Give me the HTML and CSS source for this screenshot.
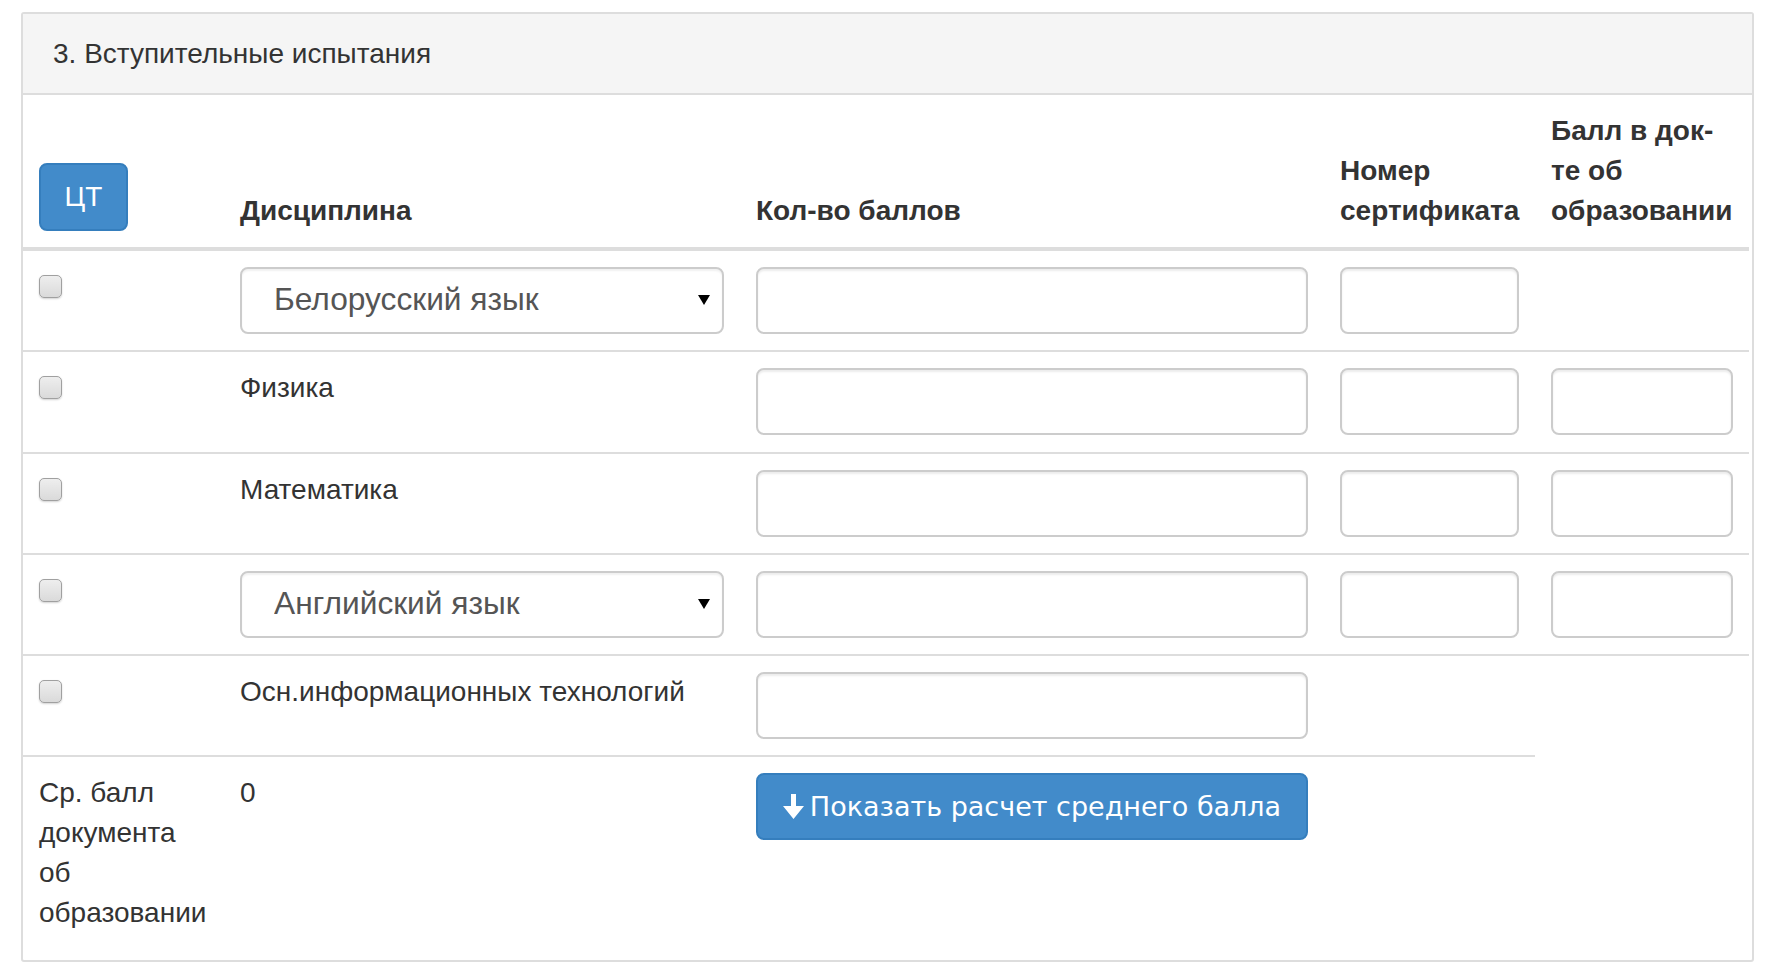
FILE: index.html
```html
<!DOCTYPE html>
<html lang="ru">
<head>
<meta charset="utf-8">
<title>Вступительные испытания</title>
<link rel="stylesheet" href="styles.css">
</head>
<body>
<div class="panel">
  <div class="panel-heading">3. Вступительные испытания</div>
  <table class="exams">
    <colgroup>
      <col class="c1"><col class="c2"><col class="c3"><col class="c4"><col class="c5">
    </colgroup>
    <thead>
      <tr>
        <th><button class="btn btn-ct" type="button">ЦТ</button></th>
        <th>Дисциплина</th>
        <th>Кол-во баллов</th>
        <th>Номер сертификата</th>
        <th>Балл в док-те об образовании</th>
      </tr>
    </thead>
    <tbody>
      <tr>
        <td><input type="checkbox" class="chk"></td>
        <td>
          <div class="select-wrap">
            <select class="form-control select"><option>Белорусский язык</option></select>
            <svg class="caret" viewBox="0 0 12 10" width="12" height="10"><path d="M0 0h12L6 10z" fill="#000"/></svg>
          </div>
        </td>
        <td><input type="text" class="form-control"></td>
        <td><input type="text" class="form-control"></td>
        <td></td>
      </tr>
      <tr>
        <td><input type="checkbox" class="chk"></td>
        <td>Физика</td>
        <td><input type="text" class="form-control"></td>
        <td><input type="text" class="form-control"></td>
        <td><input type="text" class="form-control"></td>
      </tr>
      <tr>
        <td><input type="checkbox" class="chk"></td>
        <td>Математика</td>
        <td><input type="text" class="form-control"></td>
        <td><input type="text" class="form-control"></td>
        <td><input type="text" class="form-control"></td>
      </tr>
      <tr>
        <td><input type="checkbox" class="chk"></td>
        <td>
          <div class="select-wrap">
            <select class="form-control select"><option>Английский язык</option></select>
            <svg class="caret" viewBox="0 0 12 10" width="12" height="10"><path d="M0 0h12L6 10z" fill="#000"/></svg>
          </div>
        </td>
        <td><input type="text" class="form-control"></td>
        <td><input type="text" class="form-control"></td>
        <td><input type="text" class="form-control"></td>
      </tr>
      <tr>
        <td><input type="checkbox" class="chk"></td>
        <td>Осн.информационных технологий</td>
        <td><input type="text" class="form-control"></td>
        <td></td>
        <td></td>
      </tr>
      <tr class="avg-row">
        <td>Ср. балл документа об образовании</td>
        <td>0</td>
        <td>
          <button class="btn btn-calc" type="button"><svg class="arrow" viewBox="0 0 21 25" width="21" height="25"><path d="M8 0h5v12h8L10.5 25 0 12h8z" fill="#fff"/></svg>Показать расчет среднего балла</button>
        </td>
        <td></td>
      </tr>
    </tbody>
  </table>
</div>
</body>
</html>
```
FILE: styles.css
```css
html, body {
  background: #fff;
}
body {
  margin: 12px 20px 0 21px;
  font-family: "Liberation Sans", Arial, sans-serif;
  font-size: 28px;
  line-height: 40px;
  color: #333;
}
.panel {
  border: 2px solid #ddd;
  border-radius: 3px;
  background: #fff;
  padding-bottom: 10px;
}
.panel-heading {
  background: #f5f5f5;
  border-bottom: 2px solid #ddd;
  padding: 20px 30px 19px;
}
.exams {
  width: 1726px;
  table-layout: fixed;
  border-collapse: collapse;
  border-spacing: 0;
}
.c1 { width: 201px; }
.c2 { width: 516px; }
.c3 { width: 584px; }
.c4 { width: 211px; }
.c5 { width: 214px; }
.exams th {
  text-align: left;
  font-weight: bold;
  vertical-align: bottom;
  padding: 16px;
  border-bottom: 4px solid #ddd;
}
.exams td {
  vertical-align: top;
  padding: 16px 16px 16.3px;
  border-top: 2px solid #ddd;
}
.btn {
  font-family: inherit;
  cursor: pointer;
  color: #fff;
  background: #428bca;
  border: 2px solid #357ebd;
  border-radius: 8px;
}
.btn-ct {
  display: block;
  width: 89px;
  height: 68px;
  padding: 0;
  font-family: "Liberation Sans", Arial, sans-serif;
  font-size: 28px;
  line-height: 40px;
}
.form-control {
  display: block;
  box-sizing: border-box;
  width: 100%;
  height: 67px;
  margin: 0;
  border: 2px solid #ccc;
  border-radius: 8px;
  background: #fff;
  box-shadow: inset 0 2px 2px rgba(0, 0, 0, 0.075);
  font-family: "Liberation Sans", Arial, sans-serif;
  font-size: 28px;
  color: #555;
  padding: 0 24px;
}
.select-wrap {
  position: relative;
}
.select {
  -webkit-appearance: none;
  appearance: none;
  padding: 0 40px 3px 32px;
  font-size: 31.7px;
  box-shadow: inset 0 2px 2px rgba(0, 0, 0, 0.06);
}
.caret {
  position: absolute;
  right: 14px;
  top: 28px;
  pointer-events: none;
}
.chk {
  -webkit-appearance: none;
  appearance: none;
  display: block;
  width: 23px;
  height: 23px;
  margin: 8px 0 0;
  box-sizing: border-box;
  border: 1.5px solid #a0a0a0;
  border-radius: 5px;
  background: linear-gradient(#eeeeee, #dadada);
  box-shadow: 0 1px 2px rgba(0, 0, 0, 0.18);
}
.btn-calc {
  display: flex;
  align-items: center;
  justify-content: center;
  width: 100%;
  height: 67px;
  padding: 0 8px;
  font-family: "DejaVu Sans", Verdana, sans-serif;
  font-size: 27px;
  line-height: 40px;
}
.arrow {
  margin-right: 6px;
  flex: none;
}
```
